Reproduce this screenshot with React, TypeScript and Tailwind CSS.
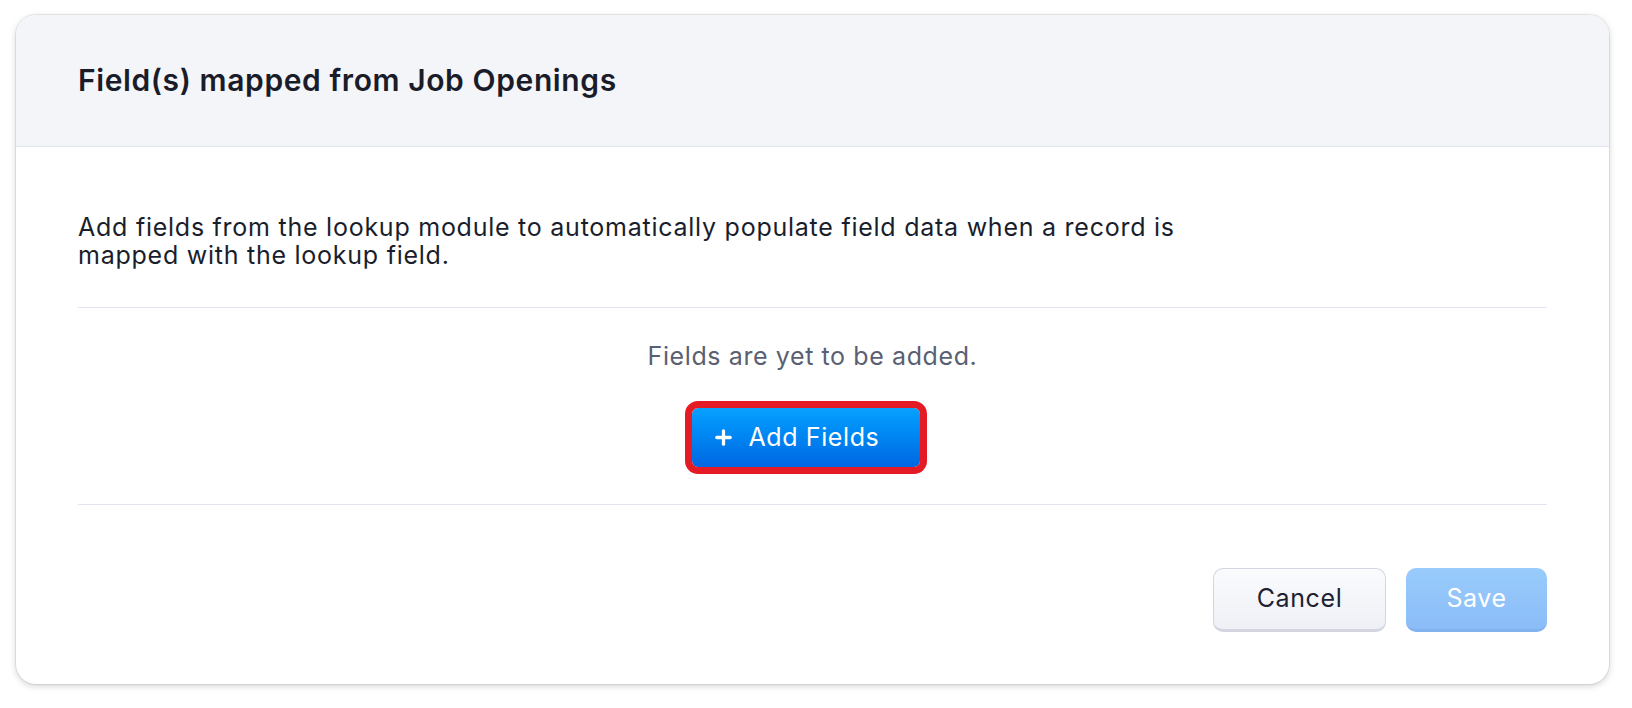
import { Plus } from 'lucide-react';

export default function App() {
  return (
    <div
      className="min-h-screen w-full bg-white pt-[15px] pl-[16px] pr-[23px]"
      style={{ fontFamily: 'Inter, "Noto Sans", sans-serif' }}
    >
      <div className="w-[1593px] h-[669px] rounded-[20px] bg-white overflow-hidden shadow-[0_0_0_1px_rgba(0,0,0,0.07),0_2px_7px_rgba(0,0,0,0.18)] flex flex-col">
        <header className="h-[132px] shrink-0 flex items-center px-[62px] bg-[#f4f5f9] border-b border-[#e1e4ee]">
          <h2 className="text-[30px] font-semibold text-[#1a1d29] tracking-[0.6px]">
            Field(s) mapped from Job Openings
          </h2>
        </header>

        <div className="flex-1 flex flex-col px-[62px] pt-[66px]">
          <p className="text-[25px] leading-[28px] tracking-[0.75px] text-[#1a1e2c] max-w-[1140px]">
            Add fields from the lookup module to automatically populate field data when a record is
            mapped with the lookup field.
          </p>

          <div className="mt-[38px] border-t border-[#e1e4ee]" />

          <div className="flex flex-col items-center pt-[34px] pb-[37px]">
            <p className="text-[25px] leading-[28px] tracking-[0.6px] text-[#5a6071]">
              Fields are yet to be added.
            </p>
            <button
              type="button"
              className="mt-[38px] mr-[14px] h-[59px] w-[228px] flex items-center justify-start gap-[14px] pl-[20px] rounded-[6px] bg-gradient-to-b from-[#0aa1ff] to-[#0066e2] text-white text-[25px] tracking-[0.6px] outline-[7px] outline-solid outline-[#e41b24]"
            >
              <Plus className="w-[23px] h-[23px]" strokeWidth={3.4} />
              <span>Add Fields</span>
            </button>
          </div>

          <div className="border-t border-[#e1e4ee]" />

          <div className="flex justify-end gap-[20px] pt-[63px]">
            <button
              type="button"
              className="h-[64px] w-[173px] rounded-[10px] border border-[#d3d6e0] border-b-[3px] bg-gradient-to-b from-[#fafbfd] to-[#eef0f6] text-[25px] tracking-[0.6px] text-[#1e2230]"
            >
              Cancel
            </button>
            <button
              type="button"
              className="h-[64px] w-[141px] rounded-[10px] border-b-[3px] border-[#82b3f0] bg-gradient-to-b from-[#99ccfc] to-[#8bbcf8] text-[25px] tracking-[0.6px] text-white"
            >
              Save
            </button>
          </div>
        </div>
      </div>
    </div>
  );
}
